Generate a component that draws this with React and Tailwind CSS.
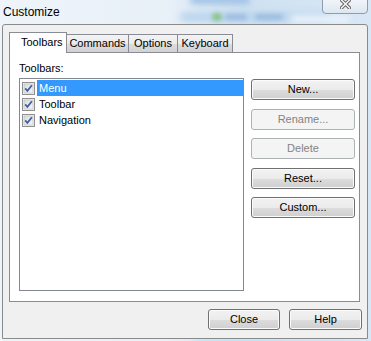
import React from "react";

const btn =
  "flex items-center justify-center h-[21px] rounded-[3px] border text-[11px] leading-none shrink-0";
const btnOn =
  "border-[#707070] text-black bg-[linear-gradient(#f2f2f2,#ebebeb_50%,#dddddd_50%,#cfcfcf)] shadow-[inset_0_0_0_1px_#fbfbfb]";
const btnOff = "border-[#adb2b5] text-[#838383] bg-[#f4f4f4]";

function Check() {
  return (
    <svg width="13" height="13" viewBox="0 0 13 13" className="shrink-0">
      <defs>
        <linearGradient id="cbg" x1="0" y1="0" x2="1" y2="1">
          <stop offset="0" stopColor="#dcdcdc" />
          <stop offset="1" stopColor="#f6f6f6" />
        </linearGradient>
      </defs>
      <rect x="0.5" y="0.5" width="12" height="12" fill="#f4f4f4" stroke="#8e8f8f" />
      <rect x="2" y="2" width="9" height="9" fill="url(#cbg)" stroke="#b8b8b8" strokeWidth="0.6" />
      <path d="M3.2 6.4 L5.4 8.9 L9.9 3.2" fill="none" stroke="#3d5fa3" strokeWidth="1.7" />
    </svg>
  );
}

function Item({ label, selected }) {
  return (
    <div className="flex items-center h-[16px] pl-[2px]">
      <Check />
      <div
        className={
          "ml-[2px] flex-1 h-[16px] flex items-center pl-[2px] text-[11px] " +
          (selected ? "bg-[#3399ff] text-white" : "text-black")
        }
      >
        {label}
      </div>
    </div>
  );
}

export default function App() {
  return (
    <div className="relative w-[371px] h-[341px] overflow-hidden font-['Liberation_Sans',Arial,sans-serif] bg-[linear-gradient(90deg,#eef4fa_0%,#e8f0f8_45%,#cfe1f2_65%,#d7e7f5_100%)]">
      {/* glass blur decorations */}
      <div className="absolute left-[190px] top-[-4px] w-[60px] h-[8px] rounded-full bg-[#9cc0e4] blur-[3px]" />
      <div className="absolute left-[180px] top-[12px] w-[150px] h-[10px] rounded-full bg-[#bcd6ee] blur-[3px]" />
      <div className="absolute left-[212px] top-[13px] w-[10px] h-[8px] rounded-full bg-[#8cc48c] blur-[2px]" />
      <div className="absolute left-[225px] top-[14px] w-[22px] h-[6px] rounded-full bg-[#9dbde0] blur-[2px]" />
      <div className="absolute left-[255px] top-[14px] w-[28px] h-[6px] rounded-full bg-[#9dbde0] blur-[2px]" />
      <div className="absolute left-[290px] top-[15px] w-[60px] h-[8px] rounded-full bg-[#eaf2fa] blur-[3px]" />
      <div className="absolute left-[195px] top-[336px] w-[80px] h-[10px] rounded-full bg-[#bfe9fb] blur-[3px]" />

      {/* title bar close button */}
      <div className="absolute left-[322px] top-[-5px] w-[46px] h-[19px] rounded-[4px] border border-[#8c9db2] bg-[linear-gradient(#f6f9fc,#dde6f0)] flex items-end justify-center pb-[4px]">
        <svg width="11" height="10" viewBox="0 0 11 10">
          <path d="M1.5 1 L9.5 9 M9.5 1 L1.5 9" stroke="#5b5b5b" strokeWidth="3.4" strokeLinecap="square" />
          <path d="M1.5 1 L9.5 9 M9.5 1 L1.5 9" stroke="#f3f3f3" strokeWidth="1.6" strokeLinecap="square" />
        </svg>
      </div>

      <div className="relative flex flex-col">
        <div className="h-[24px] flex items-center pl-[3px] text-[12px] text-black">Customize</div>

        <div className="ml-[2px] w-[366px] h-[315px] border border-[#8a8a8a] rounded-tl-[3px] rounded-tr-[3px] bg-[#f0f0f0] pl-[6px] pt-[7px] flex flex-col">
          {/* tabs */}
          <div className="flex items-end h-[20px] text-[11px] text-black">
            <div className="relative z-10 -mb-[1px] w-[58px] h-[21px] border border-b-0 border-[#898c95] bg-white flex items-center pl-[11px] pb-[1px]">
              Toolbars
            </div>
            <div className="-ml-[1px] w-[63px] h-[18px] border border-b-0 border-[#898c95] bg-[linear-gradient(#f3f3f3,#ebebeb_50%,#dddddd_50%,#d2d2d2)] flex items-center justify-center">
              Commands
            </div>
            <div className="-ml-[1px] w-[50px] h-[18px] border border-b-0 border-[#898c95] bg-[linear-gradient(#f3f3f3,#ebebeb_50%,#dddddd_50%,#d2d2d2)] flex items-center justify-center">
              Options
            </div>
            <div className="-ml-[1px] w-[56px] h-[18px] border border-b-0 border-[#898c95] bg-[linear-gradient(#f3f3f3,#ebebeb_50%,#dddddd_50%,#d2d2d2)] flex items-center justify-center">
              Keyboard
            </div>
          </div>

          {/* panel */}
          <div className="w-[351px] h-[250px] border border-[#898c95] bg-white pl-[9px] flex flex-col">
            <div className="mt-[9px] h-[13px] leading-[13px] text-[11px] text-black">Toolbars:</div>
            <div className="mt-[3px] flex">
              <div className="w-[225px] shrink-0 h-[213px] border border-[#828790] bg-white pt-[1px] flex flex-col">
                <Item label="Menu" selected />
                <Item label="Toolbar" />
                <Item label="Navigation" />
              </div>
              <div className="ml-[7px] mt-[1px] flex flex-col gap-[8.5px]">
                <div className={btn + " w-[104px] " + btnOn}>New...</div>
                <div className={btn + " w-[104px] " + btnOff}>Rename...</div>
                <div className={btn + " w-[104px] " + btnOff}>Delete</div>
                <div className={btn + " w-[104px] " + btnOn}>Reset...</div>
                <div className={btn + " w-[104px] " + btnOn}>Custom...</div>
              </div>
            </div>
          </div>

          {/* bottom buttons */}
          <div className="mt-[7px] flex justify-end pr-[5px] gap-[9px]">
            <div className={btn + " w-[72px] " + btnOn}>Close</div>
            <div className={btn + " w-[73px] " + btnOn}>Help</div>
          </div>
        </div>
      </div>
    </div>
  );
}
